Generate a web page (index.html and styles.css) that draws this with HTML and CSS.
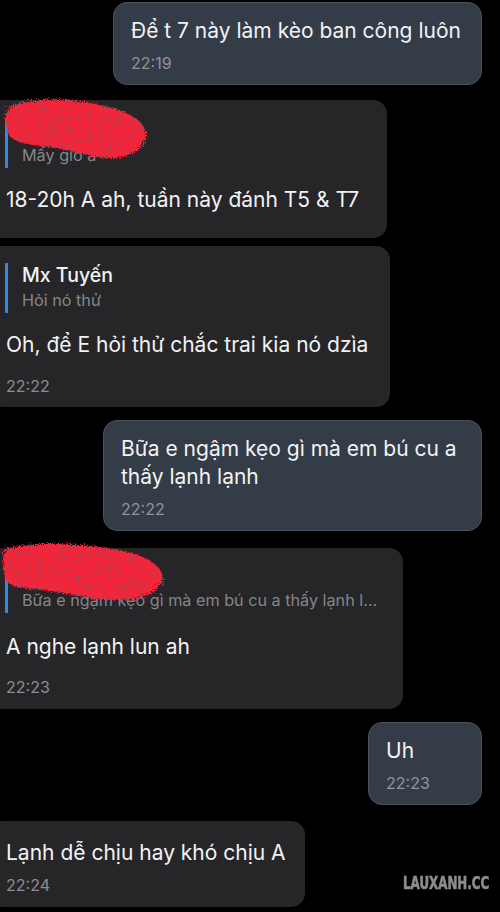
FILE: index.html
```html
<!DOCTYPE html>
<html lang="vi">
<head>
<meta charset="utf-8">
<link rel="stylesheet" href="styles.css">
</head>
<body>
<svg class="defs" width="0" height="0" aria-hidden="true">
  <defs>
    <filter id="rough" x="-10%" y="-15%" width="120%" height="130%">
      <feTurbulence type="fractalNoise" baseFrequency="0.9" numOctaves="2" seed="3" result="n"/>
      <feDisplacementMap in="SourceGraphic" in2="n" scale="8" result="d"/>
      <feTurbulence type="fractalNoise" baseFrequency="1.4" numOctaves="1" seed="9" result="n2"/>
      <feColorMatrix in="n2" type="matrix" values="0 0 0 0 0.35  0 0 0 0 0.06  0 0 0 0 0.09  14 0 0 0 -8.6" result="dots"/>
      <feComposite in="dots" in2="d" operator="in" result="dd"/>
      <feMerge><feMergeNode in="d"/><feMergeNode in="dd"/></feMerge>
    </filter>
  </defs>
</svg>
<div class="chat">
  <div class="row out r1">
    <div class="bubble out-b w369">
      <div class="msg">Để t 7 này làm kèo ban công luôn</div>
      <div class="time">22:19</div>
    </div>
  </div>

  <div class="row in r2">
    <div class="bubble in-b w399 b2">
      <div class="reply">
        <div class="reply-name">&nbsp;</div>
        <div class="reply-text">Mấy giờ á</div>
      </div>
      <div class="msg after-reply">18-20h A ah, tuần này đánh T5 &amp; T7</div>
      <svg class="scribble" viewBox="0 0 170 72" width="170" height="72" aria-hidden="true">
        <path filter="url(#rough)" fill="#f2283a" d="M10,12 C30,2 70,3 100,10 C125,15 145,25 146,38 C146,52 130,62 115,63 C95,64 70,55 50,52 C30,50 12,48 8,38 C5,28 4,18 10,12 Z"/>
      </svg>
    </div>
  </div>

  <div class="row in r3">
    <div class="bubble in-b w402 b3">
      <div class="reply">
        <div class="reply-name">Mx Tuyến</div>
        <div class="reply-text">Hỏi nó thử</div>
      </div>
      <div class="msg after-reply">Oh, để E hỏi thử chắc trai kia nó dzìa</div>
      <div class="time in-time gap-lg">22:22</div>
    </div>
  </div>

  <div class="row out r4">
    <div class="bubble out-b w379">
      <div class="msg wrap">Bữa e ngậm kẹo gì mà em bú cu a thấy lạnh lạnh</div>
      <div class="time">22:22</div>
    </div>
  </div>

  <div class="row in r5">
    <div class="bubble in-b w415 b5">
      <div class="reply">
        <div class="reply-name">&nbsp;</div>
        <div class="reply-text">Bữa e ngậm kẹo gì mà em bú cu a thấy lạnh l...</div>
      </div>
      <div class="msg after-reply2">A nghe lạnh lun ah</div>
      <div class="time in-time gap-md">22:23</div>
      <svg class="scribble s2" viewBox="0 0 170 72" width="170" height="72" aria-hidden="true">
        <path filter="url(#rough)" fill="#f2283a" d="M8,10 C40,3 80,5 120,12 C145,17 163,28 163,40 C162,52 145,60 125,62 C100,63 70,56 45,52 C25,50 8,50 5,40 C2,28 2,14 8,10 Z"/>
      </svg>
    </div>
  </div>

  <div class="row out r6">
    <div class="bubble out-b w114">
      <div class="msg">Uh</div>
      <div class="time">22:23</div>
    </div>
  </div>

  <div class="row in r7">
    <div class="bubble in-b w317 b7">
      <div class="msg">Lạnh dễ chịu hay khó chịu A</div>
      <div class="time in-time">22:24</div>
    </div>
  </div>
</div>
<div class="watermark">LAUXANH.CC</div>
</body>
</html>
```

FILE: styles.css
```css
html, body {
  margin: 0;
  padding: 0;
  background: #000;
}

body {
  width: 500px;
  height: 912px;
  overflow: hidden;
  position: relative;
  font-family: "Inter", "Noto Sans", "DejaVu Sans", sans-serif;
  color: #f2f2f4;
}

.defs {
  position: absolute;
  width: 0;
  height: 0;
}

.chat {
  display: flex;
  flex-direction: column;
  padding-top: 2px;
}

.row {
  display: flex;
}

.row.out {
  justify-content: flex-end;
  padding-right: 18px;
}

.row.in {
  justify-content: flex-start;
  margin-left: -12px;
}

.r2 { margin-top: 15px; }
.r3 { margin-top: 8px; }
.r4 { margin-top: 13px; }
.r5 { margin-top: 17px; }
.r6 { margin-top: 13px; }
.r7 { margin-top: 16px; }

.bubble {
  position: relative;
  box-sizing: border-box;
  border-radius: 14px;
}

.out-b {
  background: #343c47;
  border: 1px solid #4a525d;
  padding: 14px 12px 11px 17px;
}

.in-b {
  background: #262628;
  padding: 17px 10px 11px 18px;
}

.w369 { width: 369px; }
.w379 { width: 379px; }
.w114 { width: 114px; }
.w399 { width: 399px; }
.w402 { width: 402px; }
.w415 { width: 415px; }
.w317 { width: 317px; }

.b2 { padding-top: 18px; padding-bottom: 24px; }
.b5 { padding-top: 15px; padding-bottom: 12px; }
.b7 { padding-top: 18px; padding-bottom: 12px; }

.msg {
  font-size: 21px;
  line-height: 28px;
  white-space: nowrap;
  letter-spacing: 0;
}

.msg.wrap {
  white-space: normal;
}

.time {
  margin-top: 8px;
  font-size: 16px;
  line-height: 20px;
  color: #8c95a0;
}

.in-time {
  color: #8d8d92;
}

.gap-lg { margin-top: 17px; }
.gap-md { margin-top: 16px; }

.reply {
  border-left: 3px solid #3488e6;
  border-radius: 1px;
  padding-left: 14px;
  margin-left: -1px;
}

.reply-name {
  font-size: 19.5px;
  line-height: 25px;
  font-weight: 500;
  color: #f2f2f4;
  white-space: nowrap;
}

.reply-text {
  font-size: 16.2px;
  line-height: 25px;
  color: #85858a;
  white-space: nowrap;
}

.after-reply { margin-top: 18px; }
.after-reply2 { margin-top: 20px; }

.scribble {
  position: absolute;
  left: 12px;
  top: -5px;
}

.scribble.s2 {
  top: -10px;
}

.watermark {
  position: absolute;
  left: 403px;
  top: 873px;
  font-family: "DejaVu Sans", "Liberation Sans", sans-serif;
  font-weight: 700;
  font-size: 18px;
  line-height: 20px;
  color: #8c8c8c;
  letter-spacing: 0;
  -webkit-text-stroke: 0.7px #8c8c8c;
  transform: scaleX(0.66);
  transform-origin: left top;
}
```
